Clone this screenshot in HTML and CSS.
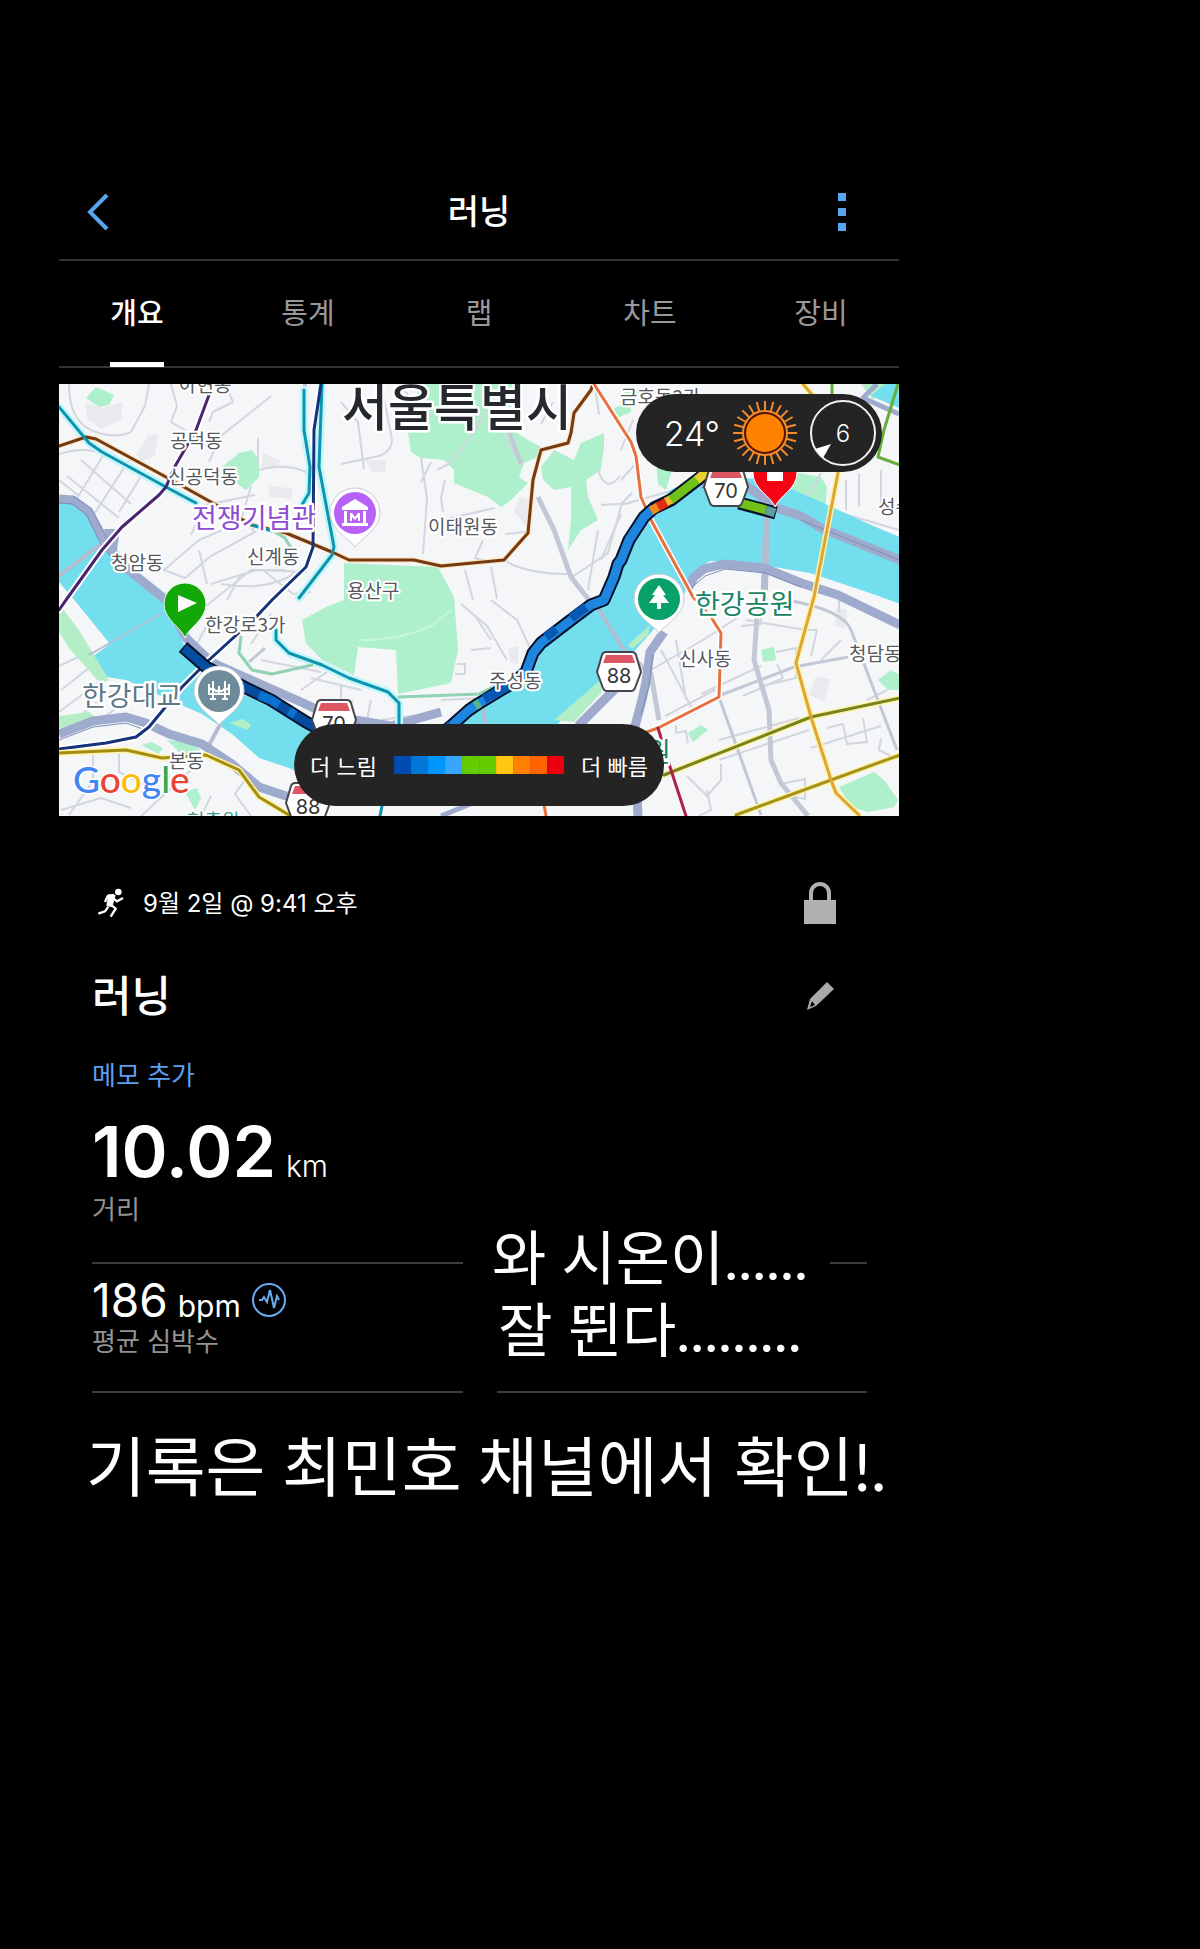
FILE: index.html
```html
<!DOCTYPE html>
<html lang="ko">
<head>
    <meta charset="UTF-8">
    <meta name="viewport" content="width=device-width, initial-scale=1">
    <title>러닝</title>
    <link rel="stylesheet" href="styles.css">
</head>
<body>
<div class="app">
    <header class="top">
        <button type="button" class="back" aria-label="뒤로">
            <svg width="24" height="38" viewBox="0 0 24 38"><path d="M21 2L4 19l17 17"/></svg>
        </button>
        <h1>러닝</h1>
        <button type="button" class="more" aria-label="더 보기">
            <svg width="10" height="38" viewBox="0 0 10 38"><path d="M1 0h8v8H1zM1 15h8v8H1zM1 30h8v8H1z"/></svg>
        </button>
    </header>
    <nav class="tabs">
        <a href="#" class="on">개요</a>
        <a href="#">통계</a>
        <a href="#">랩</a>
        <a href="#">차트</a>
        <a href="#">장비</a>
    </nav>

    <div class="map">
        <svg class="map-img" viewBox="58 384 840 432" preserveAspectRatio="xMidYMid slice">
            <defs>
                <g id="shield">
                    <path d="M-13-20h26q3 0 4 3l5 17-6 16q-1 3-4 3h-24q-3 0-4-3l-6-16 5-17q1-3 4-3z" fill="#fff" stroke="#45454c" stroke-width="2"/>
                    <path d="M-13-17h26l3 8h-32z" fill="#de5664"/>
                </g>
                <path id="pin" d="M0 34C-3 28-25 17-25 0a25 25 0 0 1 50 0C25 17 3 28 0 34z"/>
            </defs>
            <rect x="58" y="384" width="840" height="432" fill="#f5f6f8"/>

            <!-- 건물 구역 -->
            <g fill="#e9eaed">
                <path d="M84 403l18 5 20-6-2 18-20 9-14-10zM147 436l10-2-3 22-14 6-4-8zM262 453l18 8-4 7-16-1zM268 485l24 4-2 10-22-2zM365 460h20v12h-15zM518 497l10 3-2 27-13-15zM507 648l10-2v18l-8-2zM815 676l14 3-6 22-15-6zM835 608l11 2-2 18-10-2z"/>
            </g>
            <!-- 공원 -->
            <g fill="#aeefcc">
                <path d="M95 387l18 8-5 10-10 2-13-9zM238 453l13-3 7 10v17l-13 13-14-10-10-13z"/>
                <path d="M418 384h102l-18 40 25 16 13 7-3 10-14 6-5 14 9 6-17 17-10 7-13-10-17-7-17-7v-13l-10-10-23-2-10-6-3-19z"/>
                <path d="M540 467l13-17 20 10 7-17 23-10v14l-3 23-15 10 2 17 10 23-17 10-13 20 3-30v-33l-17 3-11-10z"/>
                <path d="M343 563l94 4 16 30 4 53-7 33-53 11-2-44-38-3-4 28-32-15-16-17-4-23 24-13 18-7z"/>
                <path d="M797 473l23 4 6 10-3 36-26-11-12-7zM655 460l16 10-6 20-8-6zM760 650l13-3 2 13-13 2zM687 733l13-8 7 5-15 12zM877 680l13-10 9 5v15h-12zM838 787l35-15 10 8 14 20-4 7-26 5-17-5zM610 410l20-10v12l-14 6zM620 388l24 0-12 16zM140 745l10-3 12 6-4 6zM184 792l12-4 4 10-6 12zM166 740l20 2 14 8-18 6z"/>
            </g>

            <!-- 골목길 -->
            <g fill="none" stroke="#d3d6df" stroke-width="2">
                <path d="M68 384q0 36 22 46t40 2l14-26 4-22M58 454q26-8 44 0t44 26M75 500l28-46M92 516l36-56M118 512l26-42M66 476l52 42M80 460l50 44M58 480l20 16M170 384l6 22-6 16 14 8M224 384l8 18-20 10-4 10M270 396l-50 40-12 26M257 438v26M240 520l10-34M258 470q30-8 50 4M190 535l14-30 50-10"/>
                <path d="M163 570l35-30 46-20 10 12-44 24-26 22zM198 550l8 34M210 584l46-14 50 2M200 610l50-40 34 0M226 600l14-26M262 570l30 24 18-2M220 584q60 10 88-24"/>
                <path d="M340 402l17 20 6 47M340 464l38-8q16-6 12-22l-10-50M396 384l34 32M420 458l6 40-4 56M430 462l-10 20M436 470l12-6 24-30 12-22M444 480l-4 18 2 14M440 520l54-12M502 435l20 30M472 600l-8-30M490 567l6 32M482 540l-8 18 14 4M503 560q20 14 67 14M504 534l20-2M540 424l12-22M594 385l4 30M597 470q8 24 22 6M600 505l30-2M600 560l20-46"/>
                <path d="M571 577l36-24 14-50 10-10M587 590l10-60M460 604l26 22 20 34M490 600l26 20 14 30M456 664h8v10h-10M440 700l40-2M470 650l20-2M490 640l-16-24"/>
                <path d="M620 450l12-30M620 480l16-18M620 505l50-14M664 560l-20 60M820 473l-16 30M845 480v30M830 510l68 20M858 473v34M880 470v40"/>
                <path d="M660 650l34 64M675 640l10 60M650 670l52-30 34-22M664 716l50-26M700 694l60-28M740 626l20-2v-10M745 620l60 10M775 652l20-4v30l-34 8M742 696l40-18-6-14M800 630h16l-6 26M820 660l20-20M718 740l80-22M718 760l90-30M675 725v8l10-2 2 12M686 776l20 20 14-16v-16M706 790l4 20-12 6M826 728l16-4 4 20 20-2-4-24M810 748l70-22M880 738l-2 12 12 6M866 700l20-10M780 784l24-5v20l-20-4M838 612v-12"/>
                <path d="M92 755v26l-24 34M118 754v18l24 12M140 816l50-46M250 816l-16-22 14-20M200 816l10-20M190 655l16-30M250 644l20-30M260 660l60 12M310 678l50 12M300 690l26-18M340 686v20M352 700l-16 28M380 720l60-8M370 700l-6 30M60 810l40-12 30 10"/>
                <path d="M360 640q40 0 70-14l20-16" stroke="#c6f6dc"/>
            </g>
            <g fill="none" stroke="#c3c8d6" stroke-width="5">
                <path d="M537 497l16 33 17 47 18 23 36 52 26 22 8 46"/>
                <path d="M756 617l-3 43 15 50 2 50 10 23 27 33"/>
                <path d="M720 695l73-28 54-10M248 662l16-14M718 697l42 118M786 600q56 10 64 30l46 120" stroke-width="3"/>
                <path d="M500 410l20 54M304 384v26" stroke-width="4"/>
            </g>

            <!-- 한강 -->
            <path d="M58 500l16 2 16 14 16 32 22 24 38 32 17 41 35 40 45 18 47 24 60 10 75-8 30-16 35-24 23-19 12-32 30-25 30-20 17-30 22-50 27-24 35-12 60 2 43 18 61 28 38 16v66l-39-14-60-20-60-10-40-2-16 12-14 30-26 26-30 34-42 34-40 45-24 46H330l-42-20-30-10-27-24-30-20-50-22-26-12-40-6-14 4 16-18 22-16-34-42-17-20z" fill="#73deee"/>
            <path d="M58 622l50 60 36 22 18 14-30 4-74 6z" fill="#f5f6f8"/>
            <path d="M58 666l26-12M60 690l28-22M58 712l40-30M70 722l40-30M92 724l30-20" fill="none" stroke="#d3d6df" stroke-width="2"/>
            <path d="M58 604l20 26 30 50-8 4-32-36-10-16zM58 716l30-4 10 8-40 8zM228 723l14-4 8 6-3 5zM553 720l27-23 23-20-3 16-27 29zM627 645l22-20-2 10-16 14zM860 384h26l-14 16z" fill="#b4eec6"/>
            <path d="M870 396l14-12h14v24z" fill="#73deee"/>

            <!-- 교량, 강변도로 -->
            <g fill="none" stroke="#b4bdcf" stroke-width="4">
                <path d="M58 576l42-32M208 745l12-22M480 700l6 32M597 608l27 44"/>
                <path d="M88 655l73-42" stroke-width="2"/>
                <path d="M766 510l-3 92" stroke-width="7"/>
            </g>
            <g fill="none" stroke="#9fabcd" stroke-width="9" stroke-linejoin="round">
                <path d="M58 499l14 1 16 12 16 30 21 26 40 32 20 38 25 24 40 18 50 22 30 14 60 10 50-14"/>
                <path d="M58 734l34-13 33-4 20 6 23 11 33 10 30 20 27 23 30 10"/>
                <path d="M700 484l30-10 45 34 25 8 20 12 79 32"/>
                <path d="M686 590l7-13 10-8 20-5 40 4 37 15 37 12 62 30"/>
                <path d="M663 632l-14 20-4 30-4 18-8 30 4 86M617 686l-40 40" />
                <path d="M735 500l35 10"/>
                <path d="M104 530l14 0-4 26z" fill="#9fabcd" stroke-width="2"/>
                <path d="M440 816l34-14M876 384l-14 14 36 16" stroke-width="5"/>
            </g>
            <g fill="none" stroke="#7d8dbb" stroke-width="1">
                <path d="M58 503l14 1 14 11 14 30 22 27M72 496l18 12 16 30M58 740l34-13 33-4 22 8M320 710l40 14M700 488l30-8M800 520l98 40M690 588l14-12 20-7 40 4 36 14M652 655l-4 30-8 30"/>
            </g>

            <!-- 지하철 -->
            <g fill="none" stroke-linejoin="round" stroke-linecap="round">
                <g stroke="#fff" stroke-width="7">
                    <path d="M208 395l-13 35-22 38-8 19-7 8-37 32-20 23-36 50-7 10"/>
                    <path d="M320 384l-7 46-1 117-7 20-34 33-16 17-47 43-27 27-33 40-13 10-30 6-47 6"/>
                </g>
                <g stroke="#c3f6fb" stroke-width="8">
                    <path d="M58 407l30 36 13 9 64 35 30 16"/>
                    <path d="M321 384l-3 83 15 80-2 8-33 43M275 630v10l13 13 33 12 27 13 39 14 11 11v37M303 390v40l6 37-1 26-10 17"/>
                </g>
                <path d="M58 446l27-9 10 2 70 38 45 25 41 23 34 8 46 19 17 8 65 0 27 6 63-6 24-27 5-53 8-30 27-7 3-10 3-20 17-23 2-6" stroke="#ffe2bd" stroke-width="5"/>
                <path d="M58 446l27-9 10 2 70 38 45 25 41 23 34 8 46 19 17 8 65 0 27 6 63-6 24-27 5-53 8-30 27-7 3-10 3-20 17-23 2-6" stroke="#733b14" stroke-width="3"/>
                <path d="M240 637l-2 16 13 17 20 4 40-9M398 697l80-3 24-12" stroke="#8fd3b4" stroke-width="3"/>
                <path d="M270 530l14 8 6 10" stroke="#8fd3b4" stroke-width="3"/>
                <g stroke="#0e94ae" stroke-width="3">
                    <path d="M58 407l30 36 13 9 64 35 30 16M251 525l20 6"/>
                    <path d="M321 384l-3 83 15 80-2 8-33 43M275 630v10l13 13 33 12 27 13 39 14 11 11v37M303 390v40l6 37-1 26-10 17M381 806l-2 10"/>
                </g>
                <path d="M208 395l-13 35-22 38-8 19-7 8-37 32-20 23-36 50-7 10" stroke="#49246f" stroke-width="3"/>
                <path d="M320 384l-7 46-1 117-7 20-34 33-16 17-47 43-27 27-33 40-13 10-30 6-47 6" stroke="#14337a" stroke-width="3"/>
                <g stroke="#fff3a6" stroke-width="6">
                    <path d="M58 753l67-3 36 8 44-3 33 15 20 27 30 18"/>
                    <path d="M802 384l10 12M837 473l-24 124-18 66 15 54 20 63 5 13 23 22M663 775l147-58 89-19M735 815l95-35 69-25"/>
                </g>
                <path d="M58 753l67-3 36 8 44-3 33 15 20 27 30 18" stroke="#a38d13" stroke-width="3"/>
                <path d="M663 775l147-58 89-19" stroke="#76831f" stroke-width="3"/>
                <path d="M735 815l95-35 69-25" stroke="#a4921c" stroke-width="3"/>
                <path d="M802 384l10 12M837 473l-24 124-18 66 15 54 20 63 5 13 23 22" stroke="#dba53a" stroke-width="3"/>
                <path d="M593 384l37 58 5 14 5 41 10 23 42 77 18 20 10 16-2 64-61 31-14 5" stroke="#fff" stroke-width="6"/>
                <path d="M593 384l37 58 5 14 5 41 10 23 42 77 18 20 10 16-2 64-61 31-14 5" stroke="#e8703f" stroke-width="3"/>
                <path d="M657 728l13 42 15 46" stroke="#b0204a" stroke-width="3"/>
                <path d="M897 384l-14 46-6 27 22 8M831 384v20" stroke="#67ad3a" stroke-width="3"/>
                <path d="M545 816l-2-12" stroke="#e8703f" stroke-width="3"/>
            </g>

            <!-- 달린 경로 -->
            <g fill="none" stroke-linejoin="round">
                <path d="M182 647l23 20 40 21 25 12 35 22 30 16h100l15-12 18-16 9-6 23-14 12-7 13-11 7-19 8-10 30-23 20-15 13-5 10-23 4-13 3-4 8-20 15-23 10-9 17-8 30-23 12-12M738 503l37 10" stroke="#06122b" stroke-width="13"/>
                <path d="M183 648l22 19 40 21 25 12 35 22 30 16" stroke="#064c9f" stroke-width="9"/>
                <path d="M258 695l12 5 8 5M288 711l6 4" stroke="#0b72cf" stroke-width="9"/>
                <path d="M435 738l15-12 18-16 9-6 23-14 12-7 13-11 7-19 8-10 30-23 20-15 13-5 10-23 4-13 3-4 8-20 15-23 10-9" stroke="#1f86e0" stroke-width="9"/>
                <path d="M440 733l10-8M483 699l17-9 10-6M545 637l10-8M570 618l15-11" stroke="#0758b4" stroke-width="9"/>
                <path d="M474 706l5-3" stroke="#55b687" stroke-width="9"/>
                <path d="M650 511l8-5" stroke="#f08a1d" stroke-width="9"/>
                <path d="M657 507l9-5" stroke="#e22a15" stroke-width="9"/>
                <path d="M665 502l6-3" stroke="#f0bb27" stroke-width="9"/>
                <path d="M670 500l27-21M739 503l26 7" stroke="#71c218" stroke-width="9"/>
                <path d="M696 480l14-12" stroke="#e8cf33" stroke-width="9"/>
                <path d="M765 510l9 3" stroke="#5f9fa0" stroke-width="9"/>
            </g>

            <!-- 지명 -->
            <g class="place">
                <text x="178" y="392">아현동</text>
                <text x="169" y="448">공덕동</text>
                <text x="167" y="484">신공덕동</text>
                <text x="110" y="570">청암동</text>
                <text x="246" y="564">신계동</text>
                <text x="427" y="534">이태원동</text>
                <text x="346" y="598">용산구</text>
                <text x="204" y="632">한강로3가</text>
                <text x="168" y="768">본동</text>
                <text x="488" y="688">주성동</text>
                <text x="678" y="666">신사동</text>
                <text x="848" y="661">청담동</text>
                <text x="877" y="514">성수</text>
                <text x="619" y="404">금호동2가</text>
                <text x="186" y="828" class="teal">현충원</text>
            </g>
            <text x="341" y="426" class="city">서울특별시</text>
            <g class="poi">
                <text x="191" y="528" fill="#8d4ad3">전쟁기념관</text>
                <text x="81" y="706" fill="#5d7886">한강대교</text>
                <text x="694" y="614" fill="#188565">한강공원</text>
                <text x="645" y="762" fill="#188565">원</text>
            </g>

            <g class="road-no">
                <use href="#shield" x="725" y="487"/><text x="725" y="498">70</text>
                <use href="#shield" x="618" y="672"/><text x="618" y="683">88</text>
                <use href="#shield" x="333" y="720"/><text x="333" y="731">70</text>
                <use href="#shield" x="307" y="803"/><text x="307" y="814">88</text>
            </g>

            <!-- 마커 -->
            <g transform="translate(354 513)">
                <use href="#pin" fill="#fff" stroke="#c9cbd0"/>
                <circle r="21" fill="#b861f7"/>
                <path d="M-13-6L0-14 13-6v3h-26zM-11-2h3v12h-3zM8-2h3v12H8zM-13 10h26v3h-26zM-5 8V0h2l3 4 3-4h2v8H3V4L0 7l-3-3v4z" fill="#fff"/>
            </g>
            <g transform="translate(218 691)">
                <use href="#pin" fill="#fff" stroke="#c9cbd0"/>
                <circle r="21" fill="#6f8b99"/>
                <path d="M-6-10V8M6-10V8M-10-7V3M0-5V3M10-7V3M-9 8h6M3 8h6M-11 3h22M-10-4q2 4 4 1 3 5 6 2 3 3 6-2 2 3 4-1" fill="none" stroke="#fff" stroke-width="2"/>
            </g>
            <g transform="translate(658 599)">
                <use href="#pin" fill="#fff" stroke="#c9cbd0"/>
                <circle r="21" fill="#09a069"/>
                <path d="M0-14l7 10H4l6 8H2v6h-4V4h-8l6-8h-3z" fill="#fff"/>
            </g>
            <path d="M184 638c-3-10-21-18-21-34a21 21 0 0 1 42 0c0 16-18 24-21 34z" fill="#12a807" stroke="#e6fbe4"/>
            <path d="M177 595v17l19-9z" fill="#fff"/>
            <path d="M774 507c-3-10-22-18-22-34a22 22 0 0 1 44 0c0 16-19 24-22 34z" fill="#f50514" stroke="#fff"/>
            <path d="M766 462h16v19h-16z" fill="#fff"/>

            <text x="72" y="793" class="google"><tspan fill="#4285f4">G</tspan><tspan fill="#ea4335">o</tspan><tspan fill="#fbbc05">o</tspan><tspan fill="#4285f4">g</tspan><tspan fill="#34a853">l</tspan><tspan fill="#ea4335">e</tspan></text>
        </svg>

        <div class="weather">
            <span class="temp">24°</span>
            <svg width="66" height="66" viewBox="-33 -33 66 66">
                <g stroke="#f58a2c" stroke-width="2">
                    <path id="ray" d="M0-32v10M0 32V22M-32 0h10M32 0H22"/>
                    <use href="#ray" transform="rotate(15)"/>
                    <use href="#ray" transform="rotate(30)"/>
                    <use href="#ray" transform="rotate(45)"/>
                    <use href="#ray" transform="rotate(60)"/>
                    <use href="#ray" transform="rotate(75)"/>
                </g>
                <circle r="22" fill="#4a1503" stroke="#f58a2c" stroke-width="2"/>
                <circle r="19" fill="#ff8100"/>
            </svg>
            <span class="wind">
                <svg width="66" height="66" viewBox="-33 -33 66 66">
                    <circle r="32" fill="none" stroke="#f2f2f2" stroke-width="2"/>
                    <path d="M-12 11l-16 5 8 9z" fill="#fff"/>
                </svg>
                <b>6</b>
            </span>
        </div>
        <div class="legend">
            <span>더 느림</span>
            <ul>
                <li class="c1"></li><li class="c2"></li><li class="c3"></li><li class="c4"></li><li class="c5"></li>
                <li class="c5"></li><li class="c6"></li><li class="c7"></li><li class="c8"></li><li class="c9"></li>
            </ul>
            <span>더 빠름</span>
        </div>
    </div>

    <main>
        <div class="row date">
            <svg width="28" height="30" viewBox="48 86 84 90">
                <circle cx="112" cy="98" r="10" fill="#fff"/>
                <path d="M72 128l8-18 20-3M98 118l10 8 18-10M90 136l14 12-15 24M82 142l-10 14-20 7" fill="none" stroke="#fff" stroke-width="7"/>
                <path d="M82 104l22 4-10 36-18-4z" fill="#fff"/>
            </svg>
            <span>9월 2일 @ 9:41 오후</span>
            <button type="button" aria-label="비공개">
                <svg width="32" height="42" viewBox="0 0 32 42"><path d="M0 18h32v24H0z" fill="#b0b0b0"/><path d="M7 19v-8a9 9 0 0 1 18 0v8" fill="none" stroke="#b0b0b0" stroke-width="4"/></svg>
            </button>
        </div>
        <div class="row name">
            <h2>러닝</h2>
            <button type="button" aria-label="이름 편집">
                <svg width="32" height="30" viewBox="0 0 32 30"><path d="M23 1l7 7-18 17-9 4 3-11z" fill="#a9a9a9"/><path d="M8 20l3 4-5 2z" fill="#000"/></svg>
            </button>
        </div>
        <a href="#" class="memo">메모 추가</a>

        <div class="stats">
            <dl class="dist">
                <dd>10.02 <small>km</small></dd>
                <dt>거리</dt>
            </dl>
            <div class="empty"></div>
            <dl>
                <dd>186 <small>bpm</small>
                    <svg width="36" height="36" viewBox="0 0 36 36"><circle cx="18" cy="18" r="16"/><path d="M8 18h3l2-3 3 5 3-12 4 18 3-12 2 4"/></svg>
                </dd>
                <dt>평균 심박수</dt>
            </dl>
            <div class="empty"></div>
            <p class="caption">와 시온이......<br>잘 뛴다.........</p>
        </div>
        <p class="notice">기록은 최민호 채널에서 확인!.</p>
    </main>
</div>
</body>
</html>
```
FILE: styles.css
```css
body,h1,h2,p,ul,dl,dd { margin: 0; padding: 0;}
body {
    background: #000;
    color: #fff;
    font-family: Inter, "Noto Sans CJK KR", sans-serif;
    font-size: 26px;
}
li { list-style: none;}
a { text-decoration: none;}
svg { display: block;}
button { padding: 0; border: none; background: none; cursor: pointer;}
.app {
    width: 70%;
    margin-left: 59px;
    padding-top: 164px;
}

/* 상단 */
.top {
    display: flex;
    align-items: center;
    justify-content: space-between;
    height: 95px;
    padding: 0 27px;
    border-bottom: 2px solid #333;
}
.top h1 { font-size: 34px; font-weight: 500; line-height: 48px;}
.back path { fill: none; stroke: #55a6ec; stroke-width: 4;}
.more path { fill: #55a6ec;}
.back,.more { width: 60px;}
.more svg { margin: 0 25px 0 auto;}
.tabs {
    display: flex;
    justify-content: center;
    height: 105px;
    margin-bottom: 16px;
    border-bottom: 2px solid #333;
}
.tabs a {
    flex: 0 0 171px;
    color: #999;
    font-size: 29px;
    line-height: 106px;
    text-align: center;
}
.tabs .on { color: #fff; font-weight: 500;}
.tabs .on:after {
    content: "";
    display: block;
    width: 54px;
    height: 5px;
    margin: -5px auto 0;
    background: #fff;
}

/* 지도 */
.map { position: relative; overflow: hidden;}
.map-img { width: 100%; height: auto;}
.map text { font-family: "Noto Sans CJK KR", sans-serif; stroke: #fff; stroke-linejoin: round; paint-order: stroke;}
.place { font-size: 19px; fill: #55585d; stroke-width: 4px;}
.place .teal { fill: #3b9c93;}
.map .city { font-size: 50px; font-weight: 500; fill: #25282c; stroke-width: 5px;}
.poi { font-size: 27px; stroke-width: 5px;}
.map .road-no text { font-family: Inter, sans-serif; font-size: 20px; fill: #333; stroke: none; text-anchor: middle;}
.map .google { font-family: Lato, sans-serif; font-size: 37px; font-weight: 500; stroke-width: 3px;}
.weather,.legend {
    position: absolute;
    display: flex;
    align-items: center;
    box-sizing: border-box;
    background: #242424;
}
.weather {
    top: 10px;
    right: 17px;
    gap: 12px;
    height: 78px;
    padding: 0 6px 0 28px;
    border-radius: 39px;
}
.temp { font-size: 34px; font-weight: 300;}
.wind { display: grid; place-items: center;}
.wind svg,.wind b { grid-area: 1 / 1;}
.wind b { font-size: 24px; font-weight: 300;}
.legend {
    bottom: 10px;
    left: 50%;
    gap: 17px;
    height: 82px;
    padding: 0 16px;
    border-radius: 41px;
    transform: translateX(-50%);
    font-size: 22px;
    white-space: nowrap;
}
.legend ul { display: flex;}
.legend li { width: 17px; height: 18px;}
.c1 { background: #004cb0;}
.c2 { background: #0078d8;}
.c3 { background: #0096ff;}
.c4 { background: #38a5ff;}
.c5 { background: #64cc00;}
.c6 { background: #ffc80f;}
.c7 { background: #ff8000;}
.c8 { background: #ff6400;}
.c9 { background: #eb0010;}

/* 활동 정보 */
main { padding: 63px 32px 0 33px;}
.row { display: flex; align-items: center; height: 48px; padding-right: 31px;}
.row button { margin-left: auto;}
.date { gap: 18px; padding-left: 5px; font-size: 24px;}
.date span { padding-bottom: 4px;}
.name { margin-top: 45px;}
.name h2 { font-size: 43px; font-weight: 500; line-height: 48px;}
.memo { display: block; margin-top: 36px; color: #5c9ff0; line-height: 40px;}
.stats {
    position: relative;
    display: grid;
    grid-template-columns: 1fr 1fr;
    column-gap: 34px;
    margin-top: 16px;
}
.stats dl,.empty { padding-bottom: 31px; border-bottom: 2px solid #3c3c3c;}
.stats dl { padding-top: 12px;}
.stats .dist { padding-top: 0; padding-bottom: 34px;}
.stats dd { display: flex; align-items: baseline; gap: 10px; height: 48px; font-size: 46px; line-height: 48px;}
.stats dt { color: #939393; line-height: 36px;}
.stats .dist dd { height: 80px; font-size: 70px; font-weight: 600; line-height: 80px;}
.stats small { font-size: 30px; font-weight: 400; line-height: 36px;}
.stats .dist small { font-weight: 300;}
.stats dd svg { align-self: center; fill: none; stroke: #68aaf4; stroke-width: 2;}
.caption {
    position: absolute;
    top: 110px;
    right: 37px;
    width: 360px;
    background: #000;
    font-family: Lato, "Noto Sans CJK KR", sans-serif;
    font-size: 59px;
    line-height: 72px;
    text-align: center;
    white-space: nowrap;
}
.notice {
    margin: 25px 0 0 -6px;
    font-family: Lato, "Noto Sans CJK KR", sans-serif;
    font-size: 65px;
    line-height: 96px;
    white-space: nowrap;
}
```
